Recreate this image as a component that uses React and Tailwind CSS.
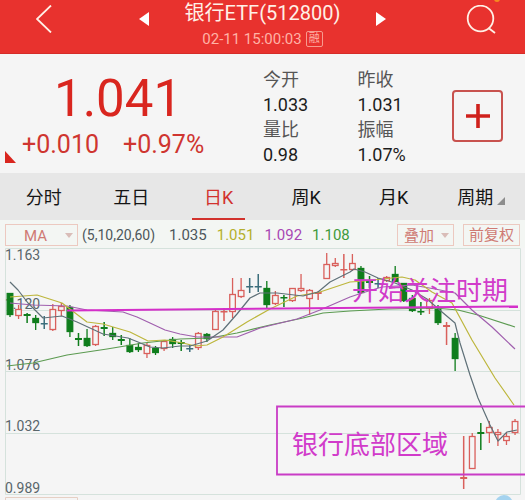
import React, { useState } from 'react';
import clsx from 'clsx';

const tabs = ['分时', '五日', '日K', '周K', '月K', '周期'];

const stats = [
    { label: '今开', value: '1.033' },
    { label: '昨收', value: '1.031' },
    { label: '量比', value: '0.98' },
    { label: '振幅', value: '1.07%' },
];

const averages = [
    { value: '1.035', color: 'text-[#4d575b]' },
    { value: '1.051', color: 'text-[#b5b02c]' },
    { value: '1.092', color: 'text-[#a847b4]' },
    { value: '1.108', color: 'text-[#3f9a3c]' },
];

const colors = { up: '#d9605c', down: '#0f7d1c', flat: '#3c6e7c' };

// [high, body top, body bottom, low, kind] in chart units
const candles = [
    [45, 45, 67, 69, 'down'],
    [57, 61, 68, 71, 'up'],
    [65, 66, 68, 75, 'down'],
    [67, 70, 75, 82, 'down'],
    [68, 75, 76, 81, 'flat'],
    [56, 61, 82, 83, 'up'],
    [55, 58, 63, 68, 'up'],
    [57, 59, 84, 89, 'down'],
    [85, 90, 92, 98, 'down'],
    [81, 90, 98, 99, 'down'],
    [77, 78, 97, 98, 'up'],
    [74, 79, 81, 88, 'down'],
    [79, 85, 89, 92, 'down'],
    [87, 91, 93, 97, 'down'],
    [90, 97, 104, 105, 'down'],
    [95, 99, 102, 104, 'down'],
    [95, 97, 106, 110, 'up'],
    [98, 100, 105, 107, 'down'],
    [92, 93, 101, 103, 'up'],
    [89, 91, 96, 100, 'down'],
    [92, 94, 96, 103, 'down'],
    [97, 100, 101, 104, 'flat'],
    [84, 85, 100, 102, 'up'],
    [85, 86, 91, 94, 'down'],
    [61, 63, 82, 82, 'up'],
    [60, 63, 64, 73, 'up'],
    [30, 46, 64, 70, 'up'],
    [30, 42, 49, 50, 'up'],
    [30, 38, 39, 45, 'flat'],
    [26, 38, 39, 44, 'flat'],
    [33, 40, 57, 60, 'down'],
    [43, 47, 56, 57, 'up'],
    [47, 49, 50, 59, 'down'],
    [40, 40, 53, 54, 'up'],
    [26, 40, 43, 44, 'up'],
    [41, 42, 51, 67, 'up'],
    [43, 44, 46, 52, 'up'],
    [5, 16, 31, 31, 'up'],
    [10, 15, 18, 19, 'up'],
    [6, 21, 22, 30, 'up'],
    [6, 15, 22, 23, 'up'],
    [18, 20, 45, 46, 'down'],
    [28, 33, 35, 40, 'down'],
    [30, 35, 36, 40, 'flat'],
    [28, 29, 33, 34, 'up'],
    [18, 26, 34, 34, 'down'],
    [35, 35, 53, 54, 'down'],
    [47, 50, 63, 64, 'down'],
    [54, 63, 64, 67, 'down'],
    [50, 52, 61, 66, 'up'],
    [57, 61, 75, 77, 'down'],
    [74, 77, 79, 97, 'up'],
    [85, 90, 111, 123, 'down'],
    [188, 229, 231, 241, 'up'],
    [185, 188, 221, 221, 'up'],
    [175, 184, 186, 202, 'down'],
    [173, 179, 185, 195, 'up'],
    [181, 184, 187, 198, 'up'],
    [185, 188, 193, 197, 'up'],
    [171, 173, 185, 187, 'up'],
];

const lines = [
    { color: '#5b9a50', points: '7,118 33,115 67,107 107,101 143,95 180,91 210,90 237,85 270,77 303,70 323,65 350,63 388,61 435,60 458,62 478,67 515,79' },
    { color: '#a05fae', points: '10,55 33,57 67,58 87,62 123,64 137,69 150,75 165,82 180,86 197,89 237,89 260,80 297,71 320,62 350,49 362,45 382,39 412,37 435,41 455,45 472,62 492,79 515,101' },
    { color: '#bdb63c', points: '10,49 37,47 62,55 87,74 103,76 130,84 148,93 165,92 183,95 195,98 207,97 223,89 247,74 270,61 297,48 320,44 350,34 365,33 382,31 402,29 415,32 432,44 452,55 472,92 495,130 514,157' },
    { color: '#5f7078', points: '10,34 18,42 28,55 43,70 62,68 77,74 103,86 128,90 138,94 150,99 163,100 180,98 190,98 207,93 223,82 237,66 250,50 260,45 277,45 303,48 318,44 330,34 350,24 354,21 365,24 378,30 395,35 412,42 427,51 442,64 455,75 460,95 470,127 478,150 490,177 498,193 507,184 517,182' },
];

const priceLabels = [
    { y: 12, text: '1.163' },
    { y: 61, text: '1.120' },
    { y: 122, text: '1.076' },
    { y: 183, text: '1.032' },
    { y: 245, text: '0.989' },
];

function Candle({ x, data }) {
    const [high, top, bottom, low, kind] = data;
    const color = colors[kind];
    const height = bottom - top;

    if (height <= 2) {
        return (
            <g fill={color}>
                <rect x={x - 0.75} y={high} width="1.5" height={low - high} />
                <rect x={x - 3.5} y={top} width="7" height={Math.max(height, 1.5)} />
            </g>
        );
    }

    return (
        <g stroke={color} strokeWidth="1.3">
            <path d={`M${x} ${high}V${top}M${x} ${bottom}V${low}`} />
            <rect
                x={x - 2.8}
                y={top + 0.5}
                width="5.6"
                height={height - 1}
                fill={kind === 'up' ? '#f5f5f5' : color}
            />
        </g>
    );
}

function Chart() {
    return (
        <svg viewBox="0 0 525 252" className="block w-full" role="img" aria-label="日K">

            <g stroke="#d5e2dc" fill="none">
                <path d="M5.5 0.5H520.5V246.5H5.5Z" />
                <path d="M5.5 62.5H520.5M5.5 123.5H520.5M5.5 185.5H520.5" />
            </g>

            <g fill="#59666b" fontSize="14">
                {priceLabels.map((label) => (
                    <text key={label.text} x="5" y={label.y}>{label.text}</text>
                ))}
            </g>

            {candles.map((data, i) => (
                <Candle key={i} x={10 + i * 8.56} data={data} />
            ))}

            {lines.map((line) => (
                <polyline
                    key={line.color}
                    points={line.points}
                    fill="none"
                    stroke={line.color}
                    strokeWidth="1.2"
                    strokeLinejoin="round"
                />
            ))}

            {/* hand-made notes */}
            <path d="M67 62.6L518 58.4" stroke="#d42fc9" strokeWidth="2" />
            <path d="M525 158.5H277V226.5H525" fill="none" stroke="#c93cc6" strokeWidth="1.8" />
            <g fill="#d13bca" fontSize="26">
                <text x="352" y="52">开始关注时期</text>
                <text x="292" y="206">银行底部区域</text>
            </g>

            <path d="M5.5 252V249.5H77.5V252" fill="none" stroke="#e6cfc4" />
            <circle cx="504" cy="256" r="9" fill="#a5d3ef" />
        </svg>
    );
}

function Dropdown({ label, className }) {
    return (
        <div className={clsx('relative h-[22px] border border-[#ecc9c0]', className)}>
            <select
                aria-label={label}
                className="block w-full h-full appearance-none bg-transparent text-[#cf7a73] outline-none"
            >
                <option>{label}</option>
            </select>
            <svg viewBox="0 0 8 5" className="absolute right-1 top-2 w-2 pointer-events-none">
                <path d="M0 0H8L4 5Z" fill="#d9bdb8" />
            </svg>
        </div>
    );
}

export default function App() {

    const [active, setActive] = useState('日K');

    return (
        <div className="w-full bg-[#f5f5f5] overflow-hidden font-[Roboto,'Noto_Sans_CJK_SC',sans-serif]">

            <header className="relative h-[54px] px-7 flex items-start justify-between bg-[#e8322e] border-b border-[#d52c28] text-[#fff0e6]">
                <button aria-label="返回" className="w-8 pt-[5px] pl-2">
                    <svg viewBox="0 0 16 28" className="w-4 h-7" fill="none" stroke="currentColor" strokeWidth="1.8">
                        <path d="M15 0.5L1 14L15 27.5" />
                    </svg>
                </button>

                <div className="flex items-start gap-9">
                    <button aria-label="上一个" className="pt-3">
                        <svg viewBox="0 0 10 14" className="w-[10px] h-[14px]"><path d="M0 7L10 0V14Z" fill="#fff" /></svg>
                    </button>
                    <div className="text-center">
                        <h1 className="text-[20px] leading-[26px]">银行ETF(512800)</h1>
                        <div className="flex items-center justify-center gap-1 text-[15px] leading-[26px] text-[#ffb3a6]">
                            02-11 15:00:03
                            <span className="px-[2px] border border-[#f79a8e] rounded-xs text-[11px] leading-[14px]">融</span>
                        </div>
                    </div>
                    <button aria-label="下一个" className="pt-3">
                        <svg viewBox="0 0 10 14" className="w-[10px] h-[14px]"><path d="M10 7L0 0V14Z" fill="#fff" /></svg>
                    </button>
                </div>

                <button aria-label="搜索" className="w-8 pt-[5px] flex justify-center">
                    <svg viewBox="0 0 30 30" className="w-[30px] h-[30px]" fill="none" stroke="currentColor" strokeWidth="1.8">
                        <circle cx="14.5" cy="13.5" r="12.8" />
                        <path d="M22.5 23L29 28" />
                    </svg>
                </button>
                <span className="absolute right-[25px] -top-1 w-[6px] h-[6px] rounded-full bg-[#f58a1f]" />
            </header>

            <section className="relative h-[119px] pt-1 pr-[22px] flex items-center">
                <div className="flex-1 pt-[2px] pl-[22px]">
                    <div className="pl-8 text-[51px] leading-[56px] text-[#d9261f]">1.041</div>
                    <div className="flex gap-6 text-[25px] leading-[36px] text-[#cf3530]">
                        <span>+0.010</span>
                        <span>+0.97%</span>
                    </div>
                </div>
                <dl className="grid grid-cols-2 w-[189px] pt-[2px] text-[18px] leading-[25px]">
                    {stats.map((item) => (
                        <div key={item.label}>
                            <dt className="text-[#555]">{item.label}</dt>
                            <dd className="text-[#1c1c1c]">{item.value}</dd>
                        </div>
                    ))}
                </dl>
                <button
                    aria-label="添加自选"
                    className="w-[51px] h-[52px] flex items-center justify-center border-2 border-[#c8524e] rounded-sm"
                >
                    <svg viewBox="0 0 24 24" className="w-6 h-6" stroke="#cf211c" strokeWidth="3.6">
                        <path d="M0 12H24M12 0V24" />
                    </svg>
                </button>
                <svg viewBox="0 0 11 12" className="absolute left-[5px] bottom-[10px] w-[11px] h-3">
                    <path d="M0 0L11 12H0Z" fill="#d9261f" />
                </svg>
            </section>

            <nav className="h-[47px] grid grid-cols-6 bg-[#e7e7e7] text-[18px] text-[#151515]">
                {tabs.map((tab) => (
                    <button
                        key={tab}
                        onClick={() => setActive(tab)}
                        className={clsx('flex items-center justify-center', active === tab && 'text-[#d2322d]')}
                    >
                        <span className={clsx('h-full px-3 pt-[3px] flex items-center border-b-2', active === tab ? 'border-[#d2322d]' : 'border-transparent')}>
                            {tab}
                            {tab === '周期' && (
                                <svg viewBox="0 0 8 8" className="w-2 h-2 ml-1 mt-2"><path d="M8 0V8H0Z" fill="#8d8d8d" /></svg>
                            )}
                        </span>
                    </button>
                ))}
            </nav>

            <div className="h-7 px-[5px] pt-[2px] flex items-center bg-[#f3f6f3] text-[15px]">
                <Dropdown label="MA" className="w-[73px] pl-[18px]" />
                <span className="ml-1 text-[14px] text-[#4d575b]">(5,10,20,60)</span>
                <div className="ml-[14px] flex gap-[10px]">
                    {averages.map((item) => (
                        <span key={item.value} className={item.color}>{item.value}</span>
                    ))}
                </div>
                <Dropdown label="叠加" className="ml-auto w-[57px] pl-[6px]" />
                <button className="ml-[9px] w-[57px] h-[22px] border border-[#ecc9c0] leading-[20px] text-[#cf7a73]">
                    前复权
                </button>
            </div>

            <Chart />
        </div>
    );
}
